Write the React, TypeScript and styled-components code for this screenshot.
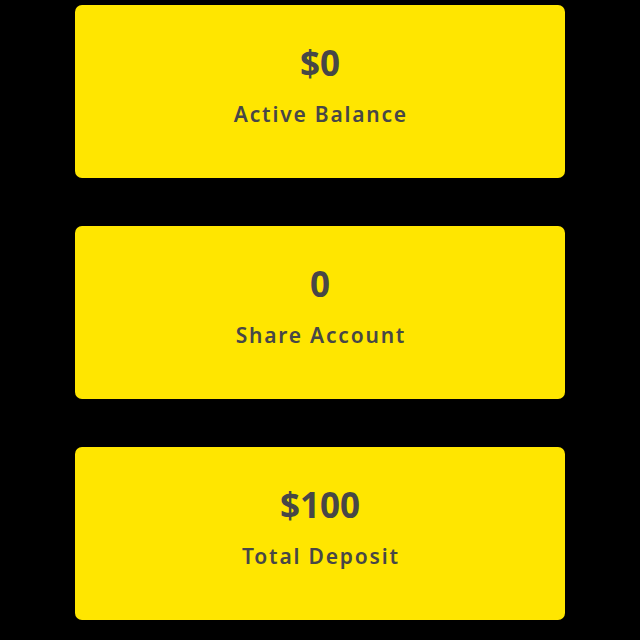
import React from 'react';
import styled, { createGlobalStyle } from 'styled-components';

const GlobalStyle = createGlobalStyle`
  html, body {
    margin: 0;
    padding: 0;
    background: #000;
  }
  body {
    font-family: "Noto Sans", "Open Sans", sans-serif;
  }
`;

interface StatCardProps {
  value: string;
  label: string;
}

const stats: StatCardProps[] = [
  { value: '$0', label: 'Active Balance' },
  { value: '0', label: 'Share Account' },
  { value: '$100', label: 'Total Deposit' },
];

const StatCard = ({ value, label }: StatCardProps) => (
  <Card>
    <Value>{value}</Value>
    <Label>{label}</Label>
  </Card>
);

const App = () => (
  <>
    <GlobalStyle />
    <Page>
      {stats.map((s) => (
        <StatCard key={s.label} value={s.value} label={s.label} />
      ))}
    </Page>
  </>
);

export default App;

// Layout
const Page = styled.main`
  display: flex;
  flex-direction: column;
  align-items: center;
  gap: 48px;
  padding: 5px 0 20px;
  min-height: 640px;
  box-sizing: border-box;
  background: #000;
`;

// Card
const Card = styled.section`
  width: 490px;
  height: 173px;
  box-sizing: border-box;
  background: #ffe600;
  border-radius: 7px;
  display: flex;
  flex-direction: column;
  align-items: center;
  gap: 18px;
  padding-top: 38px;
  color: #474747;
`;
const Value = styled.div`
  font-size: 35px;
  font-weight: 700;
  line-height: 40px;
`;
const Label = styled.div`
  font-size: 21px;
  font-weight: 600;
  line-height: 26px;
  letter-spacing: 1.8px;
  padding-left: 1.8px;
`;
